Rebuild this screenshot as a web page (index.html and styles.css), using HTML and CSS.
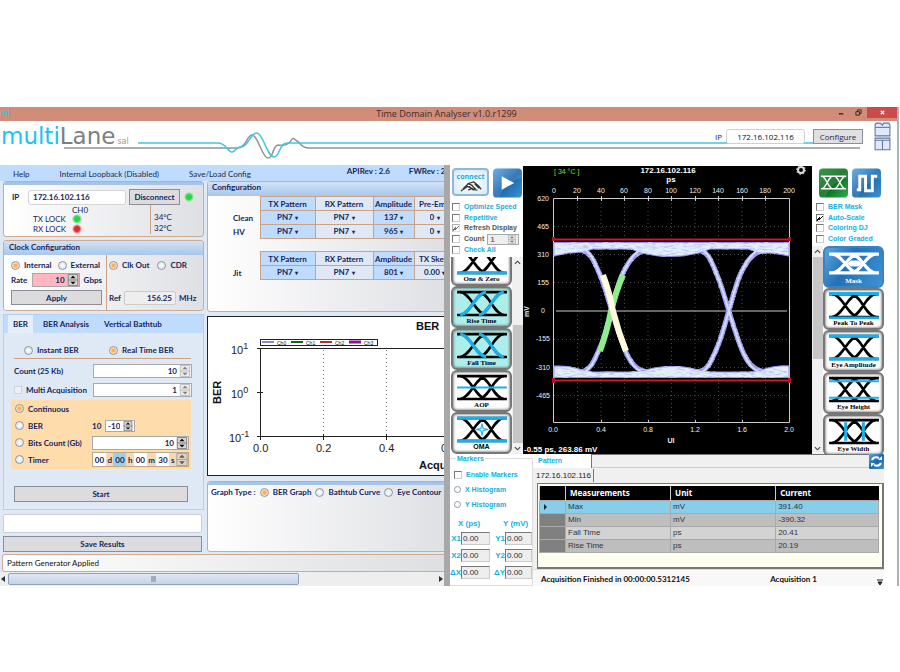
FILE: index.html
```html
<!DOCTYPE html>
<html lang="en">
<head>
<meta charset="utf-8">
<title>Time Domain Analyser v1.0.r1299</title>
<link rel="stylesheet" href="styles.css">
</head>
<body>
<svg class="defs" aria-hidden="true">
  <defs>
    <symbol id="eye" viewBox="0 0 48 26"><g fill="none" stroke="#000" stroke-width="2.500"><path d="M0 2H48M0 24H48"/><path d="M3 2C13 3 18 23 28 24M21 24C31 23 35 3 45 2M3 24C13 23 18 3 28 2M21 2C31 3 35 23 45 24"/></g></symbol>
    <symbol id="up" viewBox="0 0 8 8"><path d="M1 5.500L4 2.500L7 5.500" fill="none" stroke="#444" stroke-width="1.300"/></symbol>
    <symbol id="down" viewBox="0 0 8 8"><path d="M1 2.500L4 5.500L7 2.500" fill="none" stroke="#444" stroke-width="1.300"/></symbol>
    <symbol id="spin" viewBox="0 0 12 14"><path d="M0 0H12V14H0Z" fill="#d4d4d4"/><path d="M0.500 0.500H11.500V13.500H0.500ZM0 7H12" fill="none" stroke="#777"/><path d="M3 5L6 2L9 5ZM3 9L6 12L9 9Z"/></symbol>
    <linearGradient id="blue" x1="0" y1="0" x2="1" y2="1"><stop offset="0" stop-color="#5ba5dc"/><stop offset=".5" stop-color="#1c68ad"/><stop offset="1" stop-color="#3d93d4"/></linearGradient>
    <linearGradient id="green" x1="0" y1="0" x2="1" y2="1"><stop offset="0" stop-color="#1d8a2f"/><stop offset=".5" stop-color="#0b6a1e"/><stop offset="1" stop-color="#2bb24a"/></linearGradient>
  </defs>
</svg>

<div class="app">
  <header class="titlebar">
    <span class="appicon">ml</span>
    <h1>Time Domain Analyser v1.0.r1299</h1>
    <div class="winbtns">
      <button aria-label="Minimize"><svg viewBox="0 0 8 8"><path d="M1 5.500H6" stroke="#222" stroke-width="1.500"/></svg></button>
      <button aria-label="Restore"><svg viewBox="0 0 8 8"><path d="M1 3H5V7H1ZM3 3V1H7V5H5" fill="none" stroke="#222"/></svg></button>
      <button class="close" aria-label="Close"><svg viewBox="0 0 8 8"><path d="M2 2L6 6M6 2L2 6" stroke="#fff" stroke-width="1.300"/></svg></button>
    </div>
  </header>

  <div class="brandbar">
    <svg class="wave" viewBox="0 0 900 44" preserveAspectRatio="xMinYMin slice" aria-hidden="true">
      <path d="M64 27H238C246 27 247 14 252 14C258 14 262 37 268 37C274 37 272 25 278 24C284 25 287 24 290 21C293 15 294 18 297 20C301 22 300 26 308 27H860" fill="none" stroke="#8d9498" stroke-width="1.500"/>
      <path d="M138 22H218C226 22 228 31 232 31C236 31 235 26 240 26C248 27 250 12 257 12C263 12 267 36 274 36C280 36 279 22 287 22H860" fill="none" stroke="#41c6dc" stroke-width="1.500"/>
    </svg>
    <div class="logo"><span>multi</span><b>Lane</b><small>sal</small></div>
    <div class="conf">
      <label for="ip">IP</label>
      <input id="ip" value="172.16.102.116">
      <button>Configure</button>
      <div class="views">
        <svg viewBox="0 0 16 14"><path d="M1 13V3Q1 1 3 1H6L8 3L9 1H14L15 3V13Z" fill="#dfe9fa" stroke="#60779f"/><path d="M1 5H15" stroke="#60779f"/></svg>
        <svg viewBox="0 0 16 14"><path d="M1 1H15V12H1Z" fill="#dfe9fa" stroke="#60779f"/><path d="M1 3H15M8 3V12" stroke="#60779f"/></svg>
      </div>
    </div>
  </div>

  <main>
    <section class="ber">
      <nav class="menu">
        <a href="#">Help</a><a href="#">Internal Loopback (Disabled)</a><a href="#">Save/Load Config</a>
        <strong>APIRev : 2.6</strong><strong>FWRev : 2.1</strong>
      </nav>
      <div class="cols">
        <div class="controls">
          <div class="panel link">
            <div class="strip"></div>
            <div class="iprow">
              <label for="host">IP</label><input id="host" value="172.16.102.116"><button>Disconnect</button><i class="led"></i>
            </div>
            <div class="locks">
              <div class="lock"><span></span><span>CH0</span><span>TX LOCK</span><i class="led"></i><span>RX LOCK</span><i class="led red"></i></div>
              <div class="temps"><span>34°C</span><span>32°C</span></div>
            </div>
          </div>

          <div class="panel clock">
            <h2>Clock Configuration</h2>
            <div class="clockgrid">
              <div class="source">
                <div class="opts"><label><input type="radio" name="src" checked>Internal</label><label><input type="radio" name="src">External</label></div>
                <div class="rate"><label for="rate">Rate</label><span class="spin pink"><input id="rate" value="10"><svg><use href="#spin"/></svg></span><span>Gbps</span></div>
                <button>Apply</button>
              </div>
              <div class="out">
                <div class="opts"><label><input type="radio" name="out" checked>Clk Out</label><label><input type="radio" name="out">CDR</label></div>
                <div class="ref"><label for="ref">Ref</label><input id="ref" value="156.25"><span>MHz</span></div>
              </div>
            </div>
          </div>

          <div class="tabs">
            <div class="tabstrip" role="tablist"><button role="tab" class="on">BER</button><button role="tab">BER Analysis</button><button role="tab">Vertical Bathtub</button></div>
            <div class="tabbody">
              <div class="mode"><label><input type="radio" name="mode">Instant BER</label><label><input type="radio" name="mode" checked>Real Time BER</label></div>
              <div class="field"><label for="cnt">Count (25 Kb)</label><span class="spin dim"><input id="cnt" value="10"><svg><use href="#spin"/></svg></span></div>
              <div class="field"><label class="multi"><input type="checkbox">Multi Acquisition</label><span class="spin dim"><input aria-label="Acquisitions" value="1"><svg><use href="#spin"/></svg></span></div>
              <div class="stop">
                <div class="srow"><label><input type="radio" name="stop" checked>Continuous</label></div>
                <div class="srow"><label><input type="radio" name="stop">BER</label><span class="exp"><span>10</span><span class="spin"><input aria-label="Exponent" value="-10"><svg><use href="#spin"/></svg></span></span></div>
                <div class="srow"><label><input type="radio" name="stop">Bits Count (Gb)</label><span class="spin"><input aria-label="Bits count" value="10"><svg><use href="#spin"/></svg></span></div>
                <div class="srow"><label><input type="radio" name="stop">Timer</label><span class="timer"><input aria-label="Days" value="00">d<input class="sel" aria-label="Hours" value="00">h<input aria-label="Minutes" value="00">m<input aria-label="Seconds" value="30">s<svg><use href="#spin"/></svg></span></div>
              </div>
              <button class="start">Start</button>
            </div>
          </div>
          <input class="path" aria-label="Results file">
          <button class="save">Save Results</button>
        </div>

        <div class="views-col">
          <div class="panel config">
            <h2>Configuration</h2>
            <table class="pat">
              <thead><tr><td></td><th>TX Pattern</th><th>RX Pattern</th><th>Amplitude</th><th>Pre-Emp</th></tr></thead>
              <tbody>
              <tr><th>Clean</th><td><select aria-label="TX"><option>PN7</option></select></td><td><select aria-label="RX"><option>PN7</option></select></td><td><select aria-label="Amplitude"><option>137</option></select></td><td><select aria-label="Pre-emphasis"><option>0</option></select></td></tr>
              <tr><th>HV</th><td><select aria-label="TX"><option>PN7</option></select></td><td><select aria-label="RX"><option>PN7</option></select></td><td><select aria-label="Amplitude"><option>965</option></select></td><td><select aria-label="Pre-emphasis"><option>0</option></select></td></tr>
              </tbody>
            </table>
            <table class="pat">
              <thead><tr><td></td><th>TX Pattern</th><th>RX Pattern</th><th>Amplitude</th><th>TX Skew</th></tr></thead>
              <tbody>
              <tr><th>Jit</th><td><select aria-label="TX"><option>PN7</option></select></td><td><select aria-label="RX"><option>PN7</option></select></td><td><select aria-label="Amplitude"><option>801</option></select></td><td><select aria-label="Skew"><option>0.00</option></select></td></tr>
              </tbody>
            </table>
          </div>

          <svg class="berchart" viewBox="0 0 237 160" preserveAspectRatio="xMinYMin slice" role="img" aria-label="BER chart">
            <rect x=".5" y=".5" width="310" height="159" fill="#fff" stroke="#222"/>
            <g stroke="#222"><path d="M53.500 32V124M50 32.500H300M50 76.500H56M50 120.500H300M116.500 118V124M179.500 118V124" fill="none"/><path d="M116.500 34V118M179.500 34V118" stroke="#777" stroke-dasharray="1 3"/></g>
            <rect x="53.500" y="23.500" width="117" height="6" fill="#fff" stroke="#222"/>
            <g stroke-width="2"><path d="M55 26H67" stroke="#1a1a8a" stroke-width="1"/><path d="M84 26H96" stroke="#116611"/><path d="M113 26H125" stroke="#b03030"/><path d="M142 26H154" stroke="#90109a" stroke-width="3"/></g>
            <g class="tiny"><text x="70" y="29">Ch0</text><text x="99" y="29">Ch1</text><text x="128" y="29">Ch2</text><text x="157" y="29">Ch3</text></g>
            <g class="ax"><text x="24" y="38">10<tspan class="sup" dy="-5">1</tspan></text><text x="24" y="82">10<tspan class="sup" dy="-5">0</tspan></text><text x="22" y="126">10<tspan class="sup" dy="-5">-1</tspan></text>
            <text x="46" y="136">0.0</text><text x="109" y="136">0.2</text><text x="172" y="136">0.4</text><text x="234" y="136">0.6</text></g>
            <g class="axb"><text x="209" y="14">BER</text><text x="212" y="153">Acquisition</text><text transform="translate(14 88) rotate(-90)">BER</text></g>
          </svg>

          <div class="panel graph">
            <div class="strip"></div>
            <div class="opts"><span>Graph Type :</span><label><input type="radio" name="g" checked>BER Graph</label><label><input type="radio" name="g">Bathtub Curve</label><label><input type="radio" name="g">Eye Contour</label></div>
          </div>
        </div>
      </div>
      <div class="status">Pattern Generator Applied</div>
      <div class="hscroll"><svg viewBox="0 0 6 8"><path d="M5 1V7L1 4Z" fill="#234"/></svg><div class="track"><div class="thumb"><i></i></div></div><svg viewBox="0 0 6 8"><path d="M1 1V7L5 4Z" fill="#234"/></svg></div>
    </section>

    <div class="splitter"></div>

    <section class="scope">
      <div class="top">
        <div class="side">
          <div class="pair">
            <button class="tile pale" aria-label="Connect"><span>connect</span><svg viewBox="0 0 24 12"><path d="M1 11L8 6L13 8L9 10M3 9L9 3L14 5M8 3L15 1L20 5L23 9M12 4L17 9M14 9L19 10M16 3L21 8M10 6L15 10" fill="none" stroke="#333" stroke-width="1.400"/></svg></button>
            <button class="tile" aria-label="Run"><svg viewBox="0 0 30 30"><rect width="30" height="30" rx="4" fill="url(#blue)"/><path d="M0 0H30V10Q14 12 6 30H4Q0 30 0 26Z" fill="#fff" opacity=".12"/><path d="M9 8L22 15L9 22Z" fill="#fff"/></svg></button>
          </div>
          <div class="checks">
            <label><input type="checkbox">Optimize Speed</label>
            <label><input type="checkbox">Repetitive</label>
            <label class="off"><input type="checkbox" checked>Refresh Display</label>
            <div class="count"><label class="off"><input type="checkbox">Count</label><span class="spin grey"><input aria-label="Count" value="1"><svg><use href="#spin"/></svg></span></div>
            <label><input type="checkbox">Check All</label>
          </div>
          <div class="listbox">
            <div class="list end">
              <button><svg viewBox="0 0 48 26"><use href="#eye"/><path d="M0 24H48" stroke="#1cb0ea" stroke-width="3"/></svg>One &amp; Zero</button>
              <button class="on"><svg viewBox="0 0 48 26"><use href="#eye"/><path d="M3 24C13 23 18 3 28 2M21 24C31 23 35 3 45 2" fill="none" stroke="#1cb0ea" stroke-width="3"/></svg>Rise Time</button>
              <button class="on"><svg viewBox="0 0 48 26"><use href="#eye"/><path d="M3 2C13 3 18 23 28 24M21 2C31 3 35 23 45 24" fill="none" stroke="#1cb0ea" stroke-width="3"/></svg>Fall Time</button>
              <button><svg viewBox="0 0 48 26"><use href="#eye"/><path d="M0 13H48" stroke="#1cb0ea" stroke-width="2"/></svg>AOP</button>
              <button class="sans"><svg viewBox="0 0 48 26"><use href="#eye"/><path d="M0 2H48M0 24H48" stroke="#1cb0ea" stroke-width="3"/><path d="M24 7L25 12L30 13L25 14L24 19L23 14L18 13L23 12Z" fill="#fff" stroke="#1cb0ea"/></svg>OMA</button>
            </div>
            <div class="vscroll low"><svg><use href="#up"/></svg><i></i><svg><use href="#down"/></svg></div>
          </div>
        </div>

        <svg class="plot" viewBox="0 0 289 288" preserveAspectRatio="none" role="img" aria-label="Eye diagram">
          <defs>
            <filter id="speckle" x="-5%" y="-20%" width="110%" height="140%">
              <feTurbulence type="fractalNoise" baseFrequency="0.15 0.6" numOctaves="2" seed="4" result="n"/>
              <feColorMatrix in="n" type="matrix" values="0 0 0 0 0.56  0 0 0 0 0.56  0 0 0 0 0.9  0 4 0 0 -1.9" result="dots"/>
              <feComposite in="dots" in2="SourceGraphic" operator="in" result="d"/>
              <feMerge><feMergeNode in="SourceGraphic"/><feMergeNode in="d"/></feMerge>
            </filter>
          </defs>
          <rect width="289" height="288"/>
          <g class="grid"><path d="M54.500 33V256M78 33V256M101.500 33V256M125 33V256M148.500 33V256M172 33V256M195.500 33V256M219 33V256M242.500 33V256M31 60.500H266M31 88.500H266M31 116.500H266M31 173.500H266M31 201.500H266M31 229.500H266"/></g>
          <path d="M30.500 256.500V32.500H266.500V256.500ZM54.500 30V35M78.500 30V35M101.500 30V35M125.500 30V35M148.500 30V35M172.500 30V35M195.500 30V35M219.500 30V35M242.500 30V35M78.500 254V256M125.500 254V256M172.500 254V256M219.500 254V256" fill="none" stroke="#ccc"/>
          <path d="M33 145H264" stroke="#888" stroke-width="1.500"/>
          <g filter="url(#speckle)">
            <g class="trace">
              <path d="M56 84C68 84 72 97 79 114C87 136 93 162 102 184C107 196 113 205 126 206M56 206C67 206 71 196 79 177C87 155 91 129 99 109C107 92 114 84 128 84"/>
              <path d="M173 84C186 84 189 97 196 114C204 136 210 162 219 184C224 196 230 205 244 206M173 206C185 206 188 196 196 177C204 155 209 129 217 109C225 92 232 84 246 84"/>
            </g>
            <g class="bands">
              <path d="M31 76.500H266V90Q250 86 236 87L225 83H187L176 87Q148 94 118 87L108 83H70L60 86Q45 86 31 90Z"/>
              <path d="M31 211.500H266V200Q250 199 236 205L225 206H187L176 204Q148 196 118 205L108 206H70L60 204Q45 199 31 200Z"/>
            </g>
          </g>
          <g class="core"><path d="M50 80C68 80 72 97 79 114C87 136 93 162 102 184C107 196 113 208 130 209M50 209C67 209 71 196 79 177C87 155 91 129 99 109C107 92 114 80 132 80M167 80C186 80 189 97 196 114C204 136 210 162 219 184C224 196 230 208 248 209M167 209C185 209 188 196 196 177C204 155 209 129 217 109C225 92 232 80 250 80"/></g>
          <path d="M77 185Q84 166 88 145Q93 125 100 109" fill="none" stroke="#8eee8e" stroke-width="6"/>
          <path d="M80 109Q86 124 90 145Q95 165 103 185" fill="none" stroke="#fffbdc" stroke-width="6"/>
          <path d="M30 73.500H267M30 214.500H267" stroke="#cf1730" stroke-width="2"/><path d="M29 71H32V75H29ZM265 71H268V75H265ZM29 212H32V217H29ZM265 212H268V217H265Z" fill="#b01028"/>
          <g class="num mid"><text x="31" y="27">0</text><text x="54" y="27">20</text><text x="78" y="27">40</text><text x="101" y="27">60</text><text x="125" y="27">80</text><text x="148" y="27">100</text><text x="172" y="27">120</text><text x="195" y="27">140</text><text x="219" y="27">160</text><text x="242" y="27">180</text><text x="266" y="27">200</text>
          <text x="30" y="266">0.0</text><text x="78" y="266">0.4</text><text x="125" y="266">0.8</text><text x="172" y="266">1.2</text><text x="219" y="266">1.6</text><text x="266" y="266">2.0</text><text x="148" y="277" class="b">UI</text></g>
          <g class="num right"><text x="26" y="35">620</text><text x="26" y="63">465</text><text x="26" y="91">310</text><text x="26" y="119">155</text><text x="22" y="147">0</text><text x="27" y="175">-155</text><text x="27" y="204">-310</text><text x="27" y="232">-465</text></g>
          <g class="num mid ttl"><text x="145" y="7">172.16.102.116</text><text x="148" y="16">ps</text></g>
          <text x="31" y="8" class="temp">[ 34 °C ]</text>
          <text class="num b" transform="translate(6 151) rotate(-90)">mV</text>
          <text x="1" y="286" class="num ttl">-0.55 ps, 263.86 mV</text>
          <circle cx="278" cy="4" r="3" fill="none" stroke="#ddd" stroke-width="2"/><circle cx="278" cy="4" r="4.500" fill="none" stroke="#ddd" stroke-dasharray="1.500 2"/>
        </svg>

        <div class="side right">
          <div class="pair">
            <button class="tile" aria-label="Eye mode"><svg viewBox="0 0 30 30"><rect width="30" height="30" rx="4" fill="url(#green)"/><path d="M0 0H30V10Q14 12 6 30H4Q0 30 0 26Z" fill="#fff" opacity=".12"/><path d="M2 8H28M2 21H28M3 8C7 8 10 21 14 21M3 21C7 21 10 8 14 8M16 8C20 8 23 21 27 21M16 21C20 21 23 8 27 8" fill="none" stroke="#fff" stroke-width="1.500"/></svg></button>
            <button class="tile" aria-label="Pulse mode"><svg viewBox="0 0 30 30"><rect width="30" height="30" rx="4" fill="url(#blue)"/><path d="M0 0H30V10Q14 12 6 30H4Q0 30 0 26Z" fill="#fff" opacity=".12"/><path d="M5 22H8V8H14V23H21V8H26" fill="none" stroke="#fff" stroke-width="3"/></svg></button>
          </div>
          <div class="checks">
            <label><input type="checkbox">BER Mask</label>
            <label><input type="checkbox" checked>Auto-Scale</label>
            <label><input type="checkbox">Coloring DJ</label>
            <label><input type="checkbox">Color Graded</label>
          </div>
          <div class="listbox">
            <div class="vscroll"><svg><use href="#up"/></svg><i></i><svg><use href="#down"/></svg></div>
            <div class="list">
              <button class="mask"><svg viewBox="0 0 48 26"><path d="M0 4H48M0 22H48M3 4C13 4 18 22 28 22M21 22C31 22 35 4 45 4M3 22C13 22 18 4 28 4M21 4C31 4 35 22 45 22" fill="none" stroke="#fff" stroke-width="3"/><path d="M17 13L21 10H28L32 13L28 16H21Z" fill="#fff"/></svg>Mask</button>
              <button><svg viewBox="0 0 48 26"><use href="#eye"/><path d="M0 1.500H48M0 25H48" stroke="#1cb0ea" stroke-width="3"/></svg>Peak To Peak</button>
              <button><svg viewBox="0 0 48 26"><use href="#eye"/><path d="M0 2H48M0 24H48" stroke="#1cb0ea" stroke-width="3"/></svg>Eye Amplitude</button>
              <button><svg viewBox="0 0 48 26"><use href="#eye"/><path d="M0 5H48M0 21H48" stroke="#1cb0ea" stroke-width="2"/></svg>Eye Height</button>
              <button><svg viewBox="0 0 48 26"><use href="#eye"/><path d="M16 4V22M33 4V22" stroke="#1cb0ea" stroke-width="3"/></svg>Eye Width</button>
            </div>
          </div>
        </div>
      </div>

      <div class="bottom">
        <fieldset>
          <legend>Markers</legend>
          <div class="mk">
            <label><input type="checkbox">Enable Markers</label>
            <label><input type="radio" name="h">X Histogram</label>
            <label><input type="radio" name="h">Y Histogram</label>
          </div>
          <div class="xy">
            <b class="hd">X (ps)</b><b class="hd">Y (mV)</b>
            <label for="x1">X1</label><input id="x1" value="0.00"><label for="y1">Y1</label><input id="y1" value="0.00">
            <label for="x2">X2</label><input id="x2" value="0.00"><label for="y2">Y2</label><input id="y2" value="0.00">
            <label for="dx">ΔX</label><input id="dx" value="0.00"><label for="dy">ΔY</label><input id="dy" value="0.00">
          </div>
        </fieldset>
        <div class="results">
          <div class="ptab"><button>Pattern</button><span></span><button class="refresh" aria-label="Refresh"><svg viewBox="0 0 15 15"><rect width="15" height="15" rx="1" fill="url(#blue)"/><path d="M3 6Q5 2 10 4M12 9Q10 13 5 11" fill="none" stroke="#fff" stroke-width="2"/><path d="M9 6H13V2ZM6 9H2V13Z" fill="#fff"/></svg></button></div>
          <div class="subtab"><button>172.16.102.116</button></div>
          <div class="tablebox">
            <table class="meas">
              <thead><tr><th></th><th>Measurements</th><th>Unit</th><th>Current</th></tr></thead>
              <tbody>
                <tr class="sel"><td><svg viewBox="0 0 4 6"><path d="M0 0L3 3L0 6Z" fill="#123"/></svg></td><td>Max</td><td>mV</td><td>391.40</td></tr>
                <tr><td></td><td>Min</td><td>mV</td><td>-390.32</td></tr>
                <tr class="lt"><td></td><td>Fall Time</td><td>ps</td><td>20.41</td></tr>
                <tr><td></td><td>Rise Time</td><td>ps</td><td>20.19</td></tr>
              </tbody>
            </table>
          </div>
          <div class="foot"><span>Acquisition Finished in 00:00:00.5312145</span><span>Acquisition 1</span><svg viewBox="0 0 6 8"><path d="M0 2H6M1 4H5L3 7Z" fill="#222" stroke="#222"/></svg></div>
        </div>
      </div>
    </section>
  </main>
</div>
</body>
</html>
```
FILE: styles.css
```css
* { box-sizing: border-box; }
body { margin: 0; padding-top: 107px; background: #fff; color: #15265c; font: 8px/10px Lato, "Open Sans", sans-serif; }
button, input, select { font: inherit; color: inherit; margin: 0; padding: 0; border: 0; background: none; border-radius: 0; min-width: 0; }
h1, h2 { margin: 0; font-size: inherit; }
svg { display: block; }
.defs { position: absolute; width: 0; height: 0; }
label { display: flex; align-items: center; white-space: nowrap; }
.app { margin-right: 1px; border-right: 2px solid #aab3bb; }

.titlebar { display: grid; grid-template-columns: 72px 1fr 76px; height: 14px; background: #d28c7a; color: #3c2a28; }
.titlebar h1 { font: 9px/13px "Open Sans", sans-serif; text-align: center; }
.appicon { color: #4fc0cc; font: bold 8px/11px "Open Sans", sans-serif; }
.winbtns { display: flex; justify-content: flex-end; }
.winbtns button { width: 17px; height: 11px; display: grid; place-items: center; }
.winbtns svg { width: 7px; height: 7px; }
.winbtns .close { width: 30px; background: #cc4a4a; }

.brandbar { position: relative; display: flex; justify-content: space-between; height: 44px; }
.wave { position: absolute; inset: 0; width: 100%; height: 100%; }
.logo { position: relative; padding-left: 1px; font: 23px/30px "DejaVu Sans", sans-serif; color: #19c4ee; }
.logo b { font-weight: 400; color: #7b7f83; }
.logo small { font-size: 8px; color: #999; margin-left: 2px; }
.conf { position: relative; display: flex; align-items: flex-start; padding: 8px 6px 0 0; }
.conf label { height: 15px; padding-right: 4px; font: 8px/15px "Open Sans", sans-serif; }
.conf input { width: 79px; height: 15px; border: 1px solid #d0d0d0; border-radius: 3px; background: #fff; text-align: center; font: 8px "Open Sans", sans-serif; color: #111; margin-right: 8px; }
.conf button { width: 50px; height: 15px; border: 1px solid #8a8fa0; background: #e0e0e2; font: 8px "Open Sans", sans-serif; margin-right: 11px; }
.views { margin-top: -7px; display: grid; }
.views svg { width: 17px; height: 15px; }

main { display: grid; grid-template-columns: minmax(0, 444fr) 6px minmax(0, 447fr); }
.splitter { background: #a8a8a8; }
.ber { background: #dfe9f6; overflow: hidden; min-width: 0; }
.menu { display: flex; height: 16px; padding-left: 13px; background: #bfdcff; white-space: nowrap; overflow: hidden; }
.menu a { color: #1a2a50; text-decoration: none; padding-top: 4px; margin-right: 30px; }
.menu strong { padding-top: 1px; margin-right: 19px; }
.menu a:nth-child(3) { margin-right: auto; }
.menu strong:last-child { margin-right: -8px; }

.cols { display: grid; grid-template-columns: 201px minmax(0, 1fr); gap: 3px; padding-left: 3px; }
.controls { display: flex; flex-direction: column; gap: 3px; }
.panel { border: 1px solid #cdab92; border-radius: 3px; background: linear-gradient(90deg, #fff, #dfe0e4); overflow: hidden; }
.strip { height: 4px; margin: -1px -1px 0; background: #a5c4e8; }
.panel h2 { background: linear-gradient(#d6e4f6, #a9c6ea); margin: -1px -1px 0; padding-left: 6px; height: 15px; line-height: 14px; }

input[type=radio], input[type=checkbox] { appearance: none; flex: none; border: 1px solid #8d99a8; background: #fff; }
input[type=radio] { width: 9px; height: 9px; border-radius: 50%; margin-right: 4px; background: radial-gradient(#fff, #d5dbe3); }
.ber input[type=radio]:checked { background: radial-gradient(#ffab52 25%, #ffdcb0 55%, #eee); }
input[type=checkbox] { width: 8px; height: 8px; margin-right: 4px; }
.opts { display: flex; font-weight: 700; }

.link { height: 56px; }
.iprow { display: flex; align-items: center; padding: 4px 8px 0; font-weight: 700; }
.iprow label { width: 16px; }
.iprow input { width: 98px; height: 15px; border: 1px solid #d5d5d5; border-radius: 3px; background: #fff; padding-left: 4px; }
.iprow button { width: 51px; height: 16px; margin: 0 4px 0 3px; }
.iprow button, .source button, .start, .save { border: 1px solid #8b8e98; background: #dcdcde; font-weight: 700; }
.led { width: 10px; height: 10px; border-radius: 50%; background: radial-gradient(#25d64a 35%, #8be49a 55%, transparent 75%); }
.led.red { background: radial-gradient(#e02a2a 35%, #f09a9a 55%, transparent 75%); }
.locks { display: flex; padding-left: 29px; justify-content: space-between; }
.lock { display: grid; grid-template-columns: 39px 16px; grid-template-rows: 9px 10px 10px; align-items: center; }
.lock span { white-space: nowrap; }
.temps { border-left: 1px solid #c9a283; width: 53px; padding: 7px 0 0 3px; display: grid; }

.clock { height: 71px; }
.clockgrid { display: grid; grid-template-columns: 102px 1fr; height: 57px; }
.source { padding: 4px 4px 0 7px; }
.source .opts { gap: 5px; }
.source .opts label:first-child { margin-right: 1px; }
.rate { display: flex; align-items: center; font-weight: 700; margin: 2px 0 4px; height: 13px; gap: 4px; }
.rate label { width: 17px; }
.source button { width: 91px; height: 15px; }
.spin { display: flex; background: #fff; border: 1px solid #a9a9a9; height: 14px; font-weight: 700; }
.spin input { flex: 1; width: 0; text-align: right; padding-right: 2px; }
.spin svg { width: 12px; height: 12px; flex: none; }
.spin.dim svg { opacity: .5; }
.pink { width: 48px; background: #ffb6c1; }
.out { border-left: 1px solid #c9a283; padding: 4px 0 0 2px; }
.out .opts { gap: 8px; }
.ref { display: flex; align-items: center; gap: 3px; margin-top: 20px; font-weight: 700; }
.ref label { width: 12px; }
.ref input { width: 52px; height: 14px; border: 1px solid #ccc; border-radius: 2px; background: #eee; text-align: right; padding-right: 3px; }
.source .opts label, .out .opts label { height: 12px; }

.tabs { border: 1px solid #b3d0f2; margin-bottom: 1px; height: 196px; background: #dfe9f6; }
.tabstrip { display: flex; height: 18px; padding-left: 4px; background: #bfdcff; }
.tabstrip button { padding: 0 5px; margin-right: 5px; font-weight: 700; line-height: 16px; white-space: nowrap; }
.tabstrip .on { background: #e6eef9; }
.tabbody { padding: 10px 10px 0; }
.mode { display: grid; grid-template-columns: 85px 1fr; height: 14px; margin: 2px 2px 5px 0; padding-left: 10px; border-bottom: 1px solid #c9a283; font-weight: 700; align-items: start; }
.field { display: grid; grid-template-columns: 79px 99px; height: 14px; margin-bottom: 5px; font-weight: 700; }
.multi input { border-color: #ccd4dd; background: #eef2f7; }
.stop { background: #ffdcab; margin: -2px 0 0 -3px; height: 69px; width: 180px; padding: 0 0 0 4px; font-weight: 700; }
.srow { display: grid; grid-template-columns: 77px 97px; height: 17px; align-items: center; }
.exp { display: flex; gap: 4px; align-items: center; }
.exp .spin { width: 30px; height: 12px; }
.exp .spin svg { height: 10px; }
.timer { display: flex; align-items: center; justify-content: space-between; height: 15px; border: 1px solid #b9a98f; background: #f3d9b4; }
.timer input { width: 13px; height: 13px; background: #fff; text-align: center; }
.timer .sel { background: #9ad0ea; }
.timer svg { width: 12px; height: 13px; opacity: .6; }
.start { display: block; width: 174px; height: 16px; margin-top: 17px; }
.path { height: 19px; border: 1px solid #c9cfd8; border-radius: 2px; background: #fff; width: 199px; }
.save { height: 16px; width: 199px; }

.views-col { display: flex; flex-direction: column; min-width: 0; }
.config { height: 131px; margin-right: -4px; }
.config h2 { padding-left: 5px; line-height: 13px; }
.pat { border-collapse: collapse; table-layout: fixed; width: 247px; margin-bottom: 12px; font-weight: 700; }
.pat th, .pat td { padding: 0; height: 14px; text-align: center; border: 1px solid #c9a283; background: #bfdcff; white-space: nowrap; }
.pat thead td { width: 52px; }
.pat thead td, .pat tbody th { background: none; border: 0; text-align: left; padding-left: 25px; }
.pat thead th { width: 55px; height: 12px; }
.pat thead th:nth-child(3) { width: 58px; }
.pat thead th:nth-child(4) { width: 41px; }
.pat thead th:nth-child(5) { width: 41px; }
.pat tr > :nth-child(3), .pat tr > :nth-child(5) { background: #dfe8f4; }
.pat select { appearance: none; font-weight: 700; }
.pat tbody td::after { content: "▾"; font-size: 6px; padding-left: 2px; }
.berchart { width: 100%; height: 160px; margin: 4px 0 5px; }
.graph { height: 71px; margin-right: -4px; }
.graph .opts { padding: 2px 0 0 3px; gap: 4px; white-space: nowrap; }
.graph .opts label { height: 10px; }
.ax { font: 11px "Liberation Sans", sans-serif; fill: #222; }
.sup { font-size: 9px; }
.axb { font: bold 11px "Liberation Sans", sans-serif; fill: #111; }
.tiny { font: 5px "Liberation Sans", sans-serif; fill: #222; }

.status { margin: 2px -4px 0 2px; height: 18px; border: 1px solid #cdab92; border-radius: 3px; background: linear-gradient(90deg, #fff, #dedfe2); padding-left: 4px; line-height: 16px; color: #111; }
.hscroll { display: flex; align-items: center; height: 14px; background: #eee; gap: 2px; }
.hscroll svg { width: 6px; height: 8px; }
.track { flex: 1; height: 12px; }
.thumb { width: 68%; height: 12px; border: 1px solid #8ca3c0; border-radius: 2px; background: linear-gradient(#dfe8f3, #c5d4e6); display: grid; place-items: center; }
.thumb i { width: 5px; height: 6px; background: #a4acb6; }

.scope { font: bold 7px/10px "Liberation Sans", sans-serif; padding-right: 13px; background: #fff; color: #12b0dd; min-width: 0; }
.top { display: grid; grid-template-columns: 73px minmax(0, 1fr) 72px; height: 289px; }
.plot { width: 100%; height: 288px; margin-top: 1px; }
.side { display: flex; flex-direction: column; padding-top: 3px; min-height: 0; height: 289px; }
.pair { display: flex; gap: 4px; padding-left: 2px; height: 34px; }
.right .pair { padding-left: 7px; }
.tile { width: 29px; height: 30px; flex: none; }
.tile > svg { width: 100%; height: 100%; }
.pale { width: 37px; height: 28px; border: 2px solid #8fb8d4; border-radius: 4px; background: radial-gradient(#fff, #d5eaf6); font: bold 7px/8px "Open Sans", sans-serif; }
.pale > svg { width: 22px; height: 11px; margin: auto; }
.checks { padding-left: 2px; margin-bottom: 1px; }
.right .checks { padding-left: 4px; margin-bottom: 2px; }
.checks label { height: 10px; margin-bottom: 1px; }
.checks > label:nth-child(2n) { margin-bottom: 0; }
.off { color: #555; }
.scope input[type=checkbox] { border-color: #777 #ccc #ccc #777; }
.scope input[type=checkbox]:checked { background: linear-gradient(-45deg, transparent 38%, #111 38%, #111 62%, transparent 62%) 0 2px / 3px 4px no-repeat, linear-gradient(135deg, transparent 38%, #111 38%, #111 62%, transparent 62%) 2px 1px / 4px 4px no-repeat, #fff; }
.scope .off input[type=checkbox]:checked { opacity: .6; }
.count { display: flex; gap: 3px; height: 11px; }
.grey { height: 11px; width: 32px; background: #eee; color: #777; font-size: 8px; }
.grey input { text-align: left; padding-left: 2px; }
.grey svg { height: 9px; opacity: .5; }
.listbox { display: flex; flex: 1; min-height: 0; }
.list { flex: 1; display: flex; flex-direction: column; overflow: hidden; min-width: 0; }
.list.end { justify-content: flex-end; padding-left: 1px; }
.list button { flex: none; height: 42px; border: 2px solid #777; border-radius: 6px; background: #fff; box-shadow: inset 0 0 3px #444; color: #000; font: bold 7px/8px "Liberation Serif", serif; white-space: nowrap; }
.list button.sans { font-family: "Liberation Sans", sans-serif; }
.list svg { width: 50px; height: 27px; margin: 1px auto 0; }
.list .on { background: #aeeeea; }
.list .mask { background: linear-gradient(120deg, #5ba5dc, #2271b8 40%, #3d93d4); border-color: #3a83c0; box-shadow: none; color: #fff; }
.vscroll { flex: none; width: 11px; display: flex; flex-direction: column; background: #f0f0f0; align-items: center; }
.vscroll svg { width: 7px; height: 11px; }
.vscroll i { width: 10px; height: 102px; background: #c6c6c6; margin-bottom: auto; }
.vscroll.low i { height: 118px; margin: auto 0 0; }

.grid path { stroke: #4a4a4a; stroke-dasharray: 1 3; fill: none; }
.bands path { fill: #e2f0fb; stroke: #8e8eea; }
.trace path { fill: none; stroke: #9a9aee; stroke-width: 5; }
.core path { fill: none; stroke: #d3dcfb; stroke-width: 2; }
.num { font: 7px "Liberation Sans", sans-serif; fill: #eee; }
.mid text { text-anchor: middle; }
.right text { text-anchor: end; }
.num.b, .num .b { font-weight: 700; }
.ttl { font-size: 8px; font-weight: 700; fill: #fff; }
.temp { font: 7px "Liberation Sans", sans-serif; fill: #7ee020; }

.bottom { display: grid; grid-template-columns: 83px minmax(0, 1fr); height: 132px; }
fieldset { margin: 0; padding: 0; border: 1px solid #ddd; border-left: 0; min-width: 0; }
legend { margin-left: 6px; padding: 0 1px; line-height: 9px; }
.mk { padding: 4px 0 0 4px; }
.mk label { height: 15px; }
.mk input[type=radio] { width: 7px; height: 7px; background: #fff; margin-right: 4px; }
.xy { display: grid; grid-template-columns: 11px 29px 15px 1fr; row-gap: 4px; padding-top: 7px; font: bold 8px/11px "Liberation Sans", sans-serif; }
.xy .hd { grid-column: span 2; padding-left: 8px; line-height: 10px; margin-bottom: -1px; white-space: nowrap; }
.xy .hd + .hd { padding-left: 13px; }
.xy label { justify-content: flex-end; overflow: hidden; }
.xy input { width: 100%; height: 13px; border: 1px solid; border-color: #777 #ccc #ccc #777; background: #eee; color: #333; font-weight: 400; padding-left: 1px; }

.results { display: flex; flex-direction: column; min-width: 0; background: #f0f0f0; }
.ptab { display: flex; height: 14px; background: #fff; }
.ptab > button:first-child { width: 59px; text-align: left; padding-left: 5px; border-right: 1px solid #777; }
.ptab span { flex: 1; background: #f0f0f0; border-top: 1px solid #777; border-bottom: 1px solid #ccc; }
.refresh { width: 15px; height: 15px; }
.subtab { height: 15px; padding-left: 2px; }
.subtab button { width: 59px; height: 13px; font: 8px/13px "Liberation Sans", sans-serif; color: #222; border-right: 1px solid #777; margin-top: 1px; text-align: center; padding-right: 1px; }
.tablebox { height: 86px; margin-left: 4px; padding: 2px 3px 0 1px; border: 1px solid #777; border-width: 1px 2px 2px 1px; background: #fffff0; }
.meas { width: 100%; border-collapse: collapse; table-layout: fixed; font: 8px/11px "Liberation Sans", sans-serif; color: #333; }
.meas th { padding: 0 0 0 4px; height: 14px; background: #000; color: #fff; text-align: left; font: bold 8px/13px "Noto Sans", sans-serif; border-left: 1px solid #ccc; }
.meas th:first-child { width: 26px; }
.meas th:nth-child(2), .meas th:nth-child(3) { width: 31%; }
.meas td { padding: 0 0 0 2px; height: 13px; background: #bebebe; border: 1px solid #aaa; }
.meas td:first-child { background: #808080; }
.meas .sel td { background: #87ceeb; }
.meas .lt td:not(:first-child) { background: #d3d3d3; }
.meas td svg { width: 4px; height: 6px; margin-left: 2px; }
.foot { flex: 1; display: flex; align-items: center; background: #f8f8f8; color: #111; padding: 1px 1px 0 8px; font: bold 8px/12px Lato, sans-serif; border-top: 1px solid #ddd; white-space: nowrap; }
.foot span:first-child { width: 67%; }
.foot span:nth-child(2) { flex: 1; }
.foot svg { width: 6px; height: 8px; align-self: flex-end; }
```
